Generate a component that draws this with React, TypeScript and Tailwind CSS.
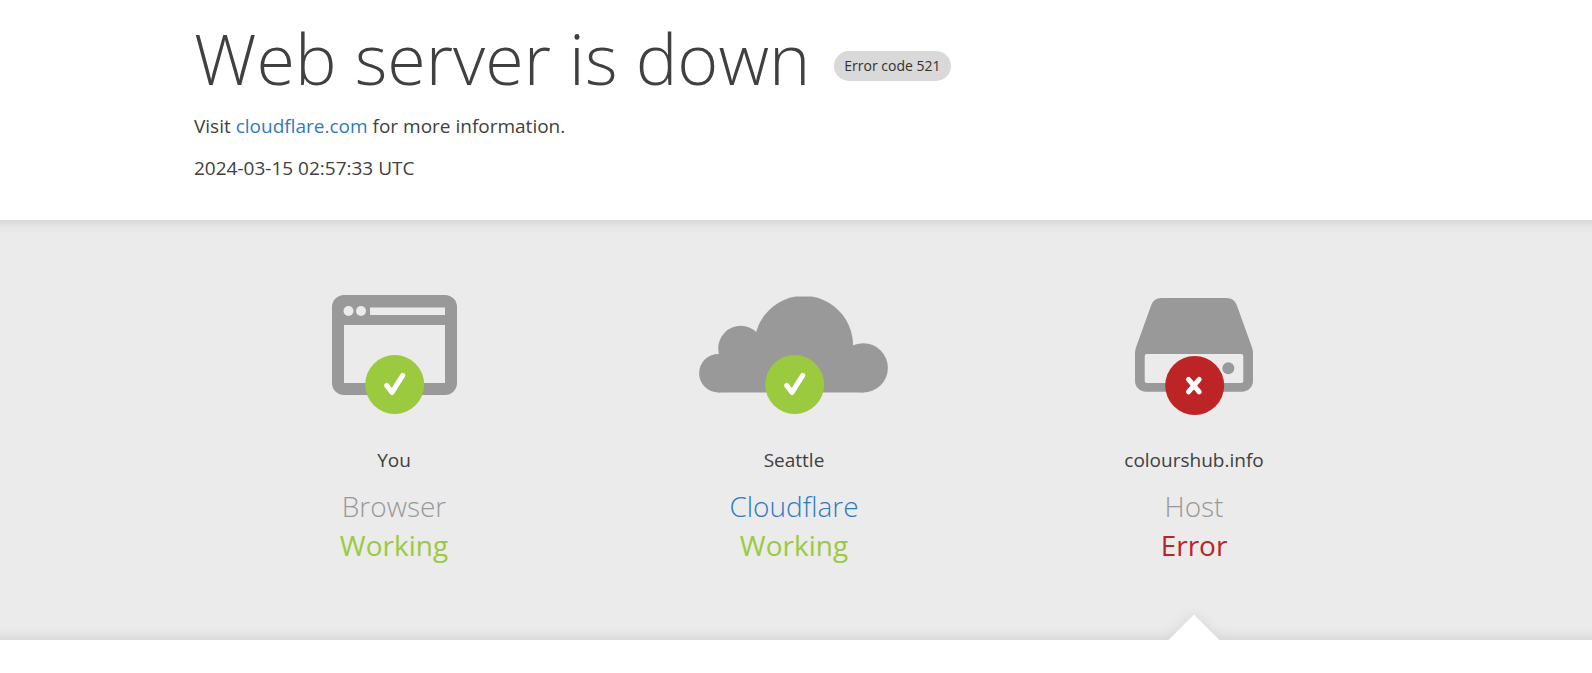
import React from 'react'
import clsx from 'clsx'

type Hop = {
  id: string
  name: string
  role: string
  href?: string
  ok: boolean
  icon: React.ReactNode
}

const hops: Hop[] = [
  { id: 'browser', name: 'You', role: 'Browser', ok: true, icon: <BrowserShape /> },
  { id: 'cloudflare', name: 'Seattle', role: 'Cloudflare', href: '#cloudflare', ok: true, icon: <CloudShape /> },
  { id: 'host', name: 'colourshub.info', role: 'Host', ok: false, icon: <ServerShape /> },
]

function BrowserShape() {
  return (
    <>
      <rect x="38" y="5" width="125" height="100" rx="12" fill="#999" />
      <rect x="50" y="35" width="101" height="58" fill="#ebebeb" />
      <rect x="76" y="17.5" width="75" height="7.5" fill="#ebebeb" />
      <circle cx="54.5" cy="21" r="5" fill="#ebebeb" />
      <circle cx="67" cy="21" r="5" fill="#ebebeb" />
    </>
  )
}

function CloudShape() {
  return (
    <g fill="#999">
      <circle cx="24.3" cy="83.2" r="19.2" />
      <circle cx="46.7" cy="58.3" r="22.5" />
      <path d="M101.7 6.5h16a49.3 49.3 0 1 1-16 0z" />
      <circle cx="169.3" cy="77.8" r="24.6" />
      <path d="M24.3 64h145v38.4h-145z" />
    </g>
  )
}

function ServerShape() {
  return (
    <>
      <path
        d="M67.500 8h65c5.500 0 8.800 3 10.500 7.700L157.500 56c1 2.700 1.500 5 1.500 7.500V91c0 6-5 10.700-11 10.700H52c-6 0-11-4.700-11-10.700V63.500c0-2.500.5-4.800 1.500-7.500L57 15.700C58.700 11 62 8 67.500 8z"
        fill="#999"
      />
      <rect x="50.7" y="64" width="98.6" height="29" rx="2" fill="#ebebeb" />
      <circle cx="134.3" cy="78.3" r="6" fill="#999" />
    </>
  )
}

function StatusMark({ ok }: { ok: boolean }) {
  return ok ? (
    <>
      <circle cx="100.7" cy="94.5" r="29.5" fill="#9bca3e" />
      <path d="M92.6 95.4l5.400 7 10.700-17" fill="none" stroke="#fff" strokeWidth="5" strokeLinecap="round" strokeLinejoin="round" />
    </>
  ) : (
    <>
      <circle cx="100.7" cy="95.5" r="29.5" fill="#bd2426" />
      <path d="M94.500 89.400l10.700 12.400M105.200 89.400l-10.700 12.400" fill="none" stroke="#fff" strokeWidth="5" strokeLinecap="round" />
    </>
  )
}

function HopColumn({ hop }: { hop: Hop }) {
  return (
    <div className="relative flex flex-1 flex-col items-center pt-[70px] pb-[76px] text-center">
      <svg viewBox="0 0 200 126" className="h-[126px] w-[200px]" aria-hidden="true">
        {hop.icon}
        <StatusMark ok={hop.ok} />
      </svg>
      <span className="mt-[30px] text-[19px] leading-7">{hop.name}</span>
      <h3 className="mt-3 text-[28px] leading-10 font-light text-[#999]">
        {hop.href ? <a href={hop.href} className="text-[#2f7bbf]">{hop.role}</a> : hop.role}
      </h3>
      <span className={clsx('text-[28px] leading-[38px]', hop.ok ? 'text-[#9bca3e]' : 'text-[#bd2426]')}>
        {hop.ok ? 'Working' : 'Error'}
      </span>
      {!hop.ok && (
        <div className="absolute bottom-0 left-1/2 size-9 -translate-x-1/2 translate-y-1/2 rotate-45 bg-white shadow-[0_0_12px_#d4d4d4]" />
      )}
    </div>
  )
}

export default function App() {
  return (
    <div className="min-h-screen bg-white font-['Open_Sans','Noto_Sans',sans-serif] text-[#404040]">
      <header className="pr-1">
        <div className="mx-auto max-w-[1200px] pt-[18px] pb-[38px]">
          <div className="flex items-center">
            <h1 className="text-[70px] leading-[80px] font-light">Web server is down</h1>
            <span className="mt-4 ml-6 rounded-full bg-[#d9d9d9] px-[10px] text-sm leading-[30px] text-[#313131]">Error code 521</span>
          </div>
          <p className="mt-[14px] text-[19px] leading-7">
            Visit <a href="#info" className="text-[#2f7bbf]">cloudflare.com</a> for more information.
          </p>
          <p className="mt-[14px] text-[19px] leading-7">2024-03-15 02:57:33 UTC</p>
        </div>
      </header>

      <section className="overflow-hidden bg-[#ebebeb] pr-1 shadow-[inset_0_14px_12px_-12px_#d0d0d0,inset_0_-14px_12px_-12px_#d0d0d0]">
        <div className="mx-auto flex max-w-[1200px]">
          {hops.map((hop) => (
            <HopColumn key={hop.id} hop={hop} />
          ))}
        </div>
      </section>
    </div>
  )
}
